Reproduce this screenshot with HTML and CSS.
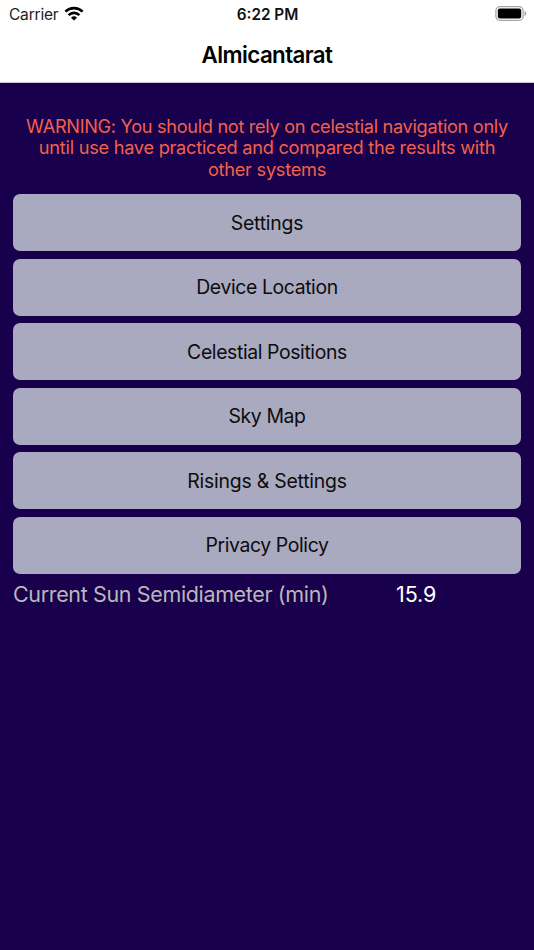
FILE: index.html
```html
<!DOCTYPE html>
<html lang="en">
<head>
<meta charset="utf-8">
<title>Almicantarat</title>
<link rel="stylesheet" href="styles.css">
</head>
<body>
<header class="top">
  <div class="status">
    <div class="carrier"><span class="carrier-name">Carrier</span>
      <svg class="wifi" width="20" height="15" viewBox="0 0 20 15"><path d="M10 14.6 7 11.7a4.3 4.3 0 0 1 6 0z" fill="#000"/><path d="M4.6 9.1a7.7 7.7 0 0 1 10.8 0M1.4 5.6a12.4 12.4 0 0 1 17.2 0" fill="none" stroke="#000" stroke-width="2.6"/></svg>
    </div>
    <div class="time">6:22 PM</div>
    <svg class="battery" width="32" height="15" viewBox="0 0 32 15"><rect x=".9" y=".7" width="27.2" height="13.6" rx="4" fill="none" stroke="#a6a6a6" stroke-width="1.3"/><rect x="2.8" y="2.6" width="23.4" height="9.8" rx="2"/><path d="M29.5 5v5q1.8-.8 1.8-2.5T29.5 5z" fill="#a6a6a6"/></svg>
  </div>
  <h1 class="title">Almicantarat</h1>
</header>
<main class="content">
  <p class="warning"><span class="lead">WARNING: You should not rely on celestial navigation only</span><br>until use have practiced and compared the results with<br>other systems</p>
  <nav class="menu">
    <button class="item loose">Settings</button>
    <button class="item">Device Location</button>
    <button class="item">Celestial Positions</button>
    <button class="item">Sky Map</button>
    <button class="item loose">Risings &amp; Settings</button>
    <button class="item">Privacy Policy</button>
  </nav>
  <div class="reading"><span class="label">Current Sun Semidiameter (min)</span><span class="value">15.9</span></div>
</main>
</body>
</html>
```
FILE: styles.css
```css
* { box-sizing: border-box; }
body { margin: 0; min-height: 950px; background: #18004c; font-family: Inter, "Liberation Sans", sans-serif; color: #000; }
.top { height: 83px; background: #fff; border-bottom: 1px solid #c8c5d2; }
.status { height: 27px; display: grid; grid-template-columns: 1fr auto 1fr; align-items: center; padding: 0 8px 0 9px; font-size: 15.5px; }
.carrier { display: flex; align-items: center; gap: 6px; }
.carrier-name { color: #222; letter-spacing: -.2px; padding-top: 1px; }
.wifi { margin-top: -1px; }
.time { font-weight: 600; font-size: 15.3px; padding-top: 1px; color: #111; }
.battery { justify-self: end; margin: -1px -1px 0 0; }
.title { margin: 0; height: 56px; line-height: 56px; text-align: center; font-size: 22.3px; font-weight: 600; letter-spacing: -.58px; }
.content { padding: 33px 13px 0; }
.warning { margin: 0; height: 78px; text-align: center; color: #f0614b; font-size: 18.2px; line-height: 21.3px; letter-spacing: -.26px; white-space: nowrap; }
.lead { letter-spacing: -.32px; }
.menu { display: grid; gap: 7.5px; }
.item { height: 57px; border: 0; border-radius: 7px; background: #a9a9bf; color: #0c0c0e; font: 19.4px Inter, sans-serif; letter-spacing: -.38px; padding: 0; }
.loose { letter-spacing: -.22px; }
.reading { display: flex; height: 41px; align-items: center; font-size: 21.5px; color: #b9b7b9; white-space: nowrap; }
.label { width: 383px; letter-spacing: -.36px; }
.value { color: #fff; letter-spacing: -.1px; }
```
